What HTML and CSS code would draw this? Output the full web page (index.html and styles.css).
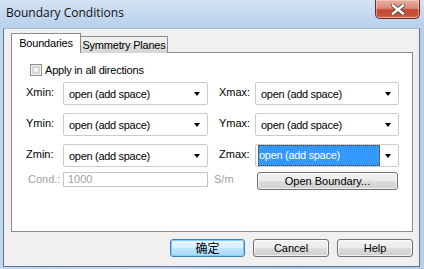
FILE: index.html
```html
<!DOCTYPE html>
<html lang="en">
<head>
    <meta charset="UTF-8">
    <title>Boundary Conditions</title>
    <link rel="stylesheet" href="styles.css">
</head>
<body>

<div class="window">
    <div class="titlebar">
        <span class="title">Boundary Conditions</span>
        <div class="close">
            <svg width="14" height="11" viewBox="0 0 14 11">
                <path d="M2 1.5 L12 9.5 M12 1.5 L2 9.5" stroke="#4a4a4a" stroke-width="4.2" stroke-linecap="square"/>
                <path d="M2 1.5 L12 9.5 M12 1.5 L2 9.5" stroke="#ffffff" stroke-width="2.4" stroke-linecap="square"/>
            </svg>
        </div>
    </div>

    <div class="client">
        <div class="tabs">
            <div class="tab active">Boundaries</div>
            <div class="tab">Symmetry Planes</div>
        </div>

        <div class="panel">
            <div class="check">
                <span class="box"></span>
                <span>Apply in all directions</span>
            </div>

            <div class="grid">
                <span class="lbl">Xmin:</span>
                <div class="combo"><span class="val">open (add space)</span><span class="arrow"></span></div>
                <span></span>
                <span class="lbl">Xmax:</span>
                <div class="combo"><span class="val">open (add space)</span><span class="arrow"></span></div>

                <span class="lbl">Ymin:</span>
                <div class="combo"><span class="val">open (add space)</span><span class="arrow"></span></div>
                <span></span>
                <span class="lbl">Ymax:</span>
                <div class="combo"><span class="val">open (add space)</span><span class="arrow"></span></div>

                <span class="lbl">Zmin:</span>
                <div class="combo"><span class="val">open (add space)</span><span class="arrow"></span></div>
                <span></span>
                <span class="lbl">Zmax:</span>
                <div class="combo focus"><span class="val">open (add space)</span><span class="arrow"></span></div>
            </div>

            <div class="cond-row">
                <span class="lbl disabled">Cond.:</span>
                <div class="input">1000</div>
                <span class="unit">S/m</span>
                <div class="btn small">Open Boundary...</div>
            </div>
        </div>

        <div class="buttons">
            <div class="btn default">确定</div>
            <div class="btn">Cancel</div>
            <div class="btn">Help</div>
        </div>
    </div>
</div>

</body>
</html>
```

FILE: styles.css
```css
* {
    box-sizing: border-box;
}
body {
    margin: 0;
    width: 424px;
    height: 269px;
    overflow: hidden;
    font-family: "Liberation Sans", Arial, sans-serif;
    font-size: 11px;
    color: #000;
}
.window {
    height: 269px;
    display: flex;
    flex-direction: column;
    background: linear-gradient(90deg, #c3d8ef 0%, #bcd2ec 40%, #a9c5e6 70%, #b7cfeb 100%);
}
.titlebar {
    height: 28px;
    display: flex;
    justify-content: space-between;
    align-items: flex-start;
    background: linear-gradient(180deg, #d4e3f4 0%, #c2d7ef 60%, #b8d0ec 100%);
}
.title {
    font-family: "Open Sans", sans-serif;
    font-size: 12px;
    line-height: 26px;
    padding-left: 6px;
    color: #111;
}
.close {
    width: 45px;
    height: 19px;
    margin-right: 4px;
    display: flex;
    justify-content: center;
    align-items: center;
    border: 1px solid #6b2a22;
    border-top: none;
    border-radius: 0 0 5px 5px;
    background: linear-gradient(180deg, #e9aea2 0%, #dc8a7b 45%, #c74631 55%, #c9503a 85%, #d8765e 100%);
    box-shadow: inset 0 0 0 1px rgba(255, 220, 210, 0.5);
}
.client {
    flex: 1;
    margin: 0 4px 2px 3px;
    padding: 4px 0 0 7px;
    background: #f0f0f0;
    border: 1px solid #5d7390;
    border-top-color: #a9bcd3;
}
.tabs {
    display: flex;
    align-items: flex-end;
    height: 20px;
    margin-bottom: -1px;
}
.tab {
    position: relative;
    height: 17px;
    width: 88px;
    margin-left: -1px;
    text-align: center;
    line-height: 16px;
    border: 1px solid #898c95;
    border-bottom: none;
    background: linear-gradient(180deg, #f3f3f3 0%, #ebebeb 50%, #dedede 51%, #d6d6d6 100%);
    letter-spacing: -0.2px;
}
.tab.active {
    z-index: 1;
    height: 20px;
    width: 70px;
    margin-left: 0;
    line-height: 18px;
    background: #fff;
}
.panel {
    width: 402px;
    height: 180px;
    background: #fff;
    border: 1px solid #898c95;
    padding: 10px 0 0 14px;
}
.check {
    display: flex;
    align-items: center;
    gap: 3px;
    height: 14px;
    padding-left: 4px;
    letter-spacing: -0.2px;
}
.box {
    width: 12px;
    height: 12px;
    border: 1px solid #8e8f8f;
    background: #f4f4f4;
    box-shadow: inset 0 0 0 1px #f4f4f4, inset 0 0 0 3px #d6d6d6;
}
.grid {
    display: grid;
    grid-template-columns: 37px 145px 11px 36px 144px;
    grid-auto-rows: 23px;
    row-gap: 8px;
    margin-top: 5px;
    align-items: center;
}
.lbl {
    padding-bottom: 3px;
}
.disabled {
    color: #a0a0a0;
}
.combo {
    height: 23px;
    display: flex;
    align-items: center;
    justify-content: space-between;
    border: 1px solid #c9cbd0;
    border-radius: 2px;
    padding: 0 7px 0 4px;
    letter-spacing: -0.3px;
}
.val {
    padding: 2px 1px;
}
.arrow {
    width: 0;
    height: 0;
    border-left: 3.5px solid transparent;
    border-right: 3.5px solid transparent;
    border-top: 4px solid #000;
}
.combo.focus {
    padding-left: 2px;
}
.combo.focus .val {
    width: 122px;
    height: 21px;
    line-height: 17px;
    background: #3399ff;
    color: #fff;
    outline: 1px dotted #5a3a00;
    outline-offset: -1px;
}
.cond-row {
    display: grid;
    grid-template-columns: 37px 145px 48px 141px;
    margin-top: 5px;
    align-items: start;
}
.cond-row .lbl {
    padding: 1px 0 0 2px;
}
.input {
    height: 15px;
    line-height: 13px;
    border: 1px solid #c6c6c6;
    padding-left: 4px;
    color: #a0a0a0;
}
.unit {
    color: #a0a0a0;
    padding: 1px 0 0 6px;
}
.btn {
    height: 18px;
    width: 76px;
    text-align: center;
    line-height: 16px;
    border: 1px solid #707070;
    border-radius: 3px;
    background: linear-gradient(180deg, #f2f2f2 0%, #ebebeb 50%, #dddddd 51%, #cfcfcf 100%);
    box-shadow: inset 0 0 0 1px rgba(255, 255, 255, 0.7);
}
.btn.small {
    width: 141px;
    margin-left: 1px;
}
.btn.default {
    width: 75px;
    border-color: #3c7fb1;
    background: linear-gradient(180deg, #eaf6fd 0%, #d9f0fc 50%, #bee6fd 51%, #a7d9f5 100%);
    box-shadow: inset 0 0 0 1px #7fd1f8;
    font-family: "Noto Sans CJK SC", sans-serif;
    font-size: 12px;
}
.buttons {
    display: flex;
    justify-content: flex-end;
    gap: 8px;
    margin-top: 7px;
    padding-right: 6px;
}
```
